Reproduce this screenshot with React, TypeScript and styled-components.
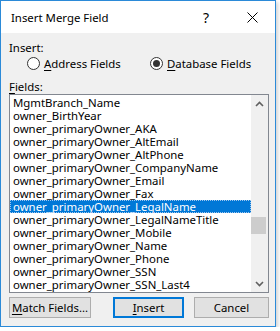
import * as React from 'react';
import styled, { createGlobalStyle } from 'styled-components';

const FIELDS = [
    'MgmtBranch_Name',
    'owner_BirthYear',
    'owner_primaryOwner_AKA',
    'owner_primaryOwner_AltEmail',
    'owner_primaryOwner_AltPhone',
    'owner_primaryOwner_CompanyName',
    'owner_primaryOwner_Email',
    'owner_primaryOwner_Fax',
    'owner_primaryOwner_LegalName',
    'owner_primaryOwner_LegalNameTitle',
    'owner_primaryOwner_Mobile',
    'owner_primaryOwner_Name',
    'owner_primaryOwner_Phone',
    'owner_primaryOwner_SSN',
    'owner_primaryOwner_SSN_Last4',
];

const SELECTED = 'owner_primaryOwner_LegalName';

const GlobalStyle = createGlobalStyle`
    body {
        margin: 0;
        background: #ffffff;
        font-family: "Noto Sans", "Open Sans", sans-serif;
        font-size: 11.4px;
        color: #000;
    }
`;

const Window = styled.div`
    box-sizing: border-box;
    width: 276px;
    height: 327px;
    border: 1px solid #2b8ad8;
    background: #f0f0f0;
    display: flex;
    flex-direction: column;
    box-shadow: 2px 2px 4px rgba(0, 0, 0, 0.18);
`;

const TitleBar = styled.div`
    height: 32px;
    background: #ffffff;
    display: flex;
    align-items: center;
    padding-left: 10px;
`;

const Title = styled.div`
    flex: 1;
`;

const CaptionButton = styled.div`
    width: 46px;
    height: 32px;
    display: flex;
    align-items: center;
    justify-content: center;
    font-size: 14px;
`;

const Body = styled.div`
    flex: 1;
    display: flex;
    flex-direction: column;
    padding: 7px 6px 8px 8px;
`;

const Label = styled.div`
    line-height: 15px;
    height: 15px;
    white-space: nowrap;
`;

const RadioRow = styled.div`
    display: flex;
    height: 16px;
    align-items: center;
    margin-bottom: 8px;
    padding-left: 18px;
`;

const RadioOption = styled.div<{ $width?: number }>`
    display: flex;
    align-items: center;
    gap: 4px;
    white-space: nowrap;
    width: ${p => (p.$width ? `${p.$width}px` : 'auto')};
`;

const RadioCircle = styled.span<{ $checked?: boolean }>`
    box-sizing: border-box;
    width: 13px;
    height: 13px;
    border-radius: 50%;
    border: 1px solid #333;
    background: #fff;
    display: flex;
    align-items: center;
    justify-content: center;

    &::after {
        content: '';
        display: ${p => (p.$checked ? 'block' : 'none')};
        width: 7px;
        height: 7px;
        border-radius: 50%;
        background: #333;
    }
`;

const Key = styled.span`
    text-decoration: underline;
    text-underline-offset: 2px;
`;

const ListBox = styled.div`
    box-sizing: border-box;
    height: 199px;
    border: 1px solid #828790;
    background: #ffffff;
    display: flex;
`;

const Items = styled.div`
    flex: 1;
    padding-top: 1px;
    display: flex;
    flex-direction: column;
    overflow: hidden;
`;

const Item = styled.div<{ $selected?: boolean }>`
    box-sizing: border-box;
    height: 13px;
    line-height: 13px;
    padding-left: 3px;
    white-space: nowrap;
    background: ${p => (p.$selected ? '#0078d7' : 'transparent')};
    color: ${p => (p.$selected ? '#ffffff' : '#000')};
    outline: ${p => (p.$selected ? '1px dotted #9fc6ee' : 'none')};
    outline-offset: -1px;
`;

const ScrollBar = styled.div`
    width: 17px;
    background: #f0f0f0;
    display: flex;
    flex-direction: column;
    align-items: center;
`;

const Arrow = styled.div`
    height: 17px;
    width: 17px;
    display: flex;
    align-items: center;
    justify-content: center;
`;

const Track = styled.div`
    flex: 1;
    width: 100%;
    display: flex;
    flex-direction: column;
`;

const Thumb = styled.div`
    width: 15px;
    height: 17px;
    background: #cdcdcd;
`;

const ButtonRow = styled.div`
    display: flex;
    margin-top: 4px;
`;

const Button = styled.div<{ $width: number; $default?: boolean; $gap?: number }>`
    box-sizing: border-box;
    width: ${p => p.$width}px;
    height: 21px;
    margin-left: ${p => p.$gap ?? 0}px;
    display: flex;
    align-items: center;
    justify-content: center;
    white-space: nowrap;
    background: #e1e1e1;
    border: ${p => (p.$default ? '2px solid #0078d7' : '1px solid #adadad')};
`;

const ArrowIcon: React.FC<{ down?: boolean }> = ({ down }) => (
    <svg width="9" height="6" viewBox="0 0 9 6">
        <path
            d={down ? 'M1 1 L4.5 4.5 L8 1' : 'M1 5 L4.5 1.5 L8 5'}
            fill="none"
            stroke="#606060"
            strokeWidth="1.6"
        />
    </svg>
);

const App: React.FC = () => {
    return (
        <>
            <GlobalStyle />
            <Window>
                <TitleBar>
                    <Title>Insert Merge Field</Title>
                    <CaptionButton>?</CaptionButton>
                    <CaptionButton>
                        <svg width="11" height="11" viewBox="0 0 11 11">
                            <path d="M0.5 0.5 L10.5 10.5 M10.5 0.5 L0.5 10.5" stroke="#000" strokeWidth="1" />
                        </svg>
                    </CaptionButton>
                </TitleBar>
                <Body>
                    <Label>Insert:</Label>
                    <RadioRow>
                        <RadioOption $width={123}>
                            <RadioCircle />
                            <span>
                                <Key>A</Key>ddress Fields
                            </span>
                        </RadioOption>
                        <RadioOption>
                            <RadioCircle $checked />
                            <span>
                                <Key>D</Key>atabase Fields
                            </span>
                        </RadioOption>
                    </RadioRow>
                    <Label>
                        <Key>F</Key>ields:
                    </Label>
                    <ListBox>
                        <Items>
                            {FIELDS.map(f => (
                                <Item key={f} $selected={f === SELECTED}>
                                    {f}
                                </Item>
                            ))}
                        </Items>
                        <ScrollBar>
                            <Arrow>
                                <ArrowIcon />
                            </Arrow>
                            <Track>
                                <div style={{ flex: 109 }} />
                                <Thumb />
                                <div style={{ flex: 43 }} />
                            </Track>
                            <Arrow>
                                <ArrowIcon down />
                            </Arrow>
                        </ScrollBar>
                    </ListBox>
                    <ButtonRow>
                        <Button $width={82}>
                            <span>
                                <Key>M</Key>atch Fields...
                            </span>
                        </Button>
                        <Button $width={71} $gap={22} $default>
                            <span>
                                <Key>I</Key>nsert
                            </span>
                        </Button>
                        <Button $width={75} $gap={10}>
                            Cancel
                        </Button>
                    </ButtonRow>
                </Body>
            </Window>
        </>
    );
};

export default App;
